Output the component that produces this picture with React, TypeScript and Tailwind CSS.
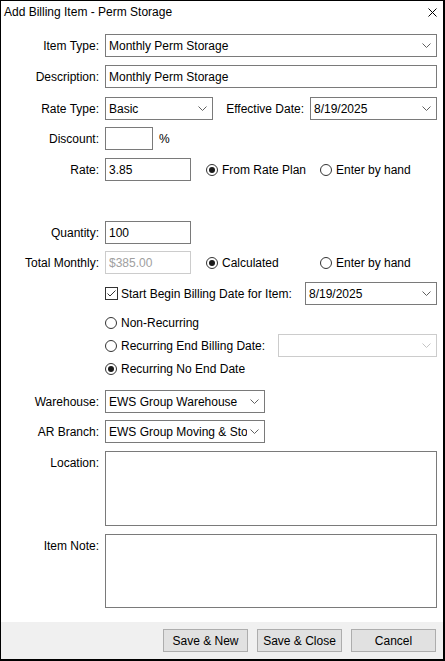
import React from "react";

const Chevron = ({ disabled }: { disabled?: boolean }) => (
  <svg width="9" height="5" viewBox="0 0 9 5" className="shrink-0">
    <polyline
      points="0.5,0.5 4.5,4.5 8.5,0.5"
      fill="none"
      stroke={disabled ? "#c4c4c4" : "#606060"}
      strokeWidth="1"
    />
  </svg>
);

const Box = ({
  className,
  children,
  disabled,
  chevron,
}: {
  className: string;
  children?: React.ReactNode;
  disabled?: boolean;
  chevron?: boolean;
}) => (
  <div
    className={
      "flex items-center h-[23px] shrink-0 border bg-white pl-[3px] overflow-hidden " +
      (disabled ? "border-[#cccccc] text-[#a0a0a0] " : "border-[#7a7a7a] ") +
      (chevron ? "pr-[5px] " : "pr-[3px] ") +
      className
    }
  >
    <div className={"flex-1 whitespace-nowrap overflow-hidden " + (chevron ? "mr-[3px]" : "")}>{children}</div>
    {chevron && <Chevron disabled={disabled} />}
  </div>
);

const Label = ({ children }: { children: React.ReactNode }) => (
  <div className="w-[98px] mr-[6px] text-right shrink-0 whitespace-nowrap">{children}</div>
);

const Radio = ({ checked, children, className }: { checked?: boolean; children: React.ReactNode; className?: string }) => (
  <div className={"flex items-center shrink-0 whitespace-nowrap " + (className ?? "")}>
    <div className="w-[12px] h-[12px] rounded-full border border-[#333333] bg-white flex items-center justify-center shrink-0">
      {checked && <div className="w-[6px] h-[6px] rounded-full bg-[#1a1a1a]" />}
    </div>
    <span className="ml-[4px]">{children}</span>
  </div>
);

const Button = ({ children }: { children: React.ReactNode }) => (
  <div className="w-[85px] h-[23px] bg-[#e1e1e1] border border-[#adadad] flex items-center justify-center">
    {children}
  </div>
);

export default function App() {
  return (
    <div className="w-[445px] h-[661px] bg-white border-l border-t border-r-2 border-b-2 border-black flex flex-col font-['Liberation_Sans',Arial,sans-serif] text-[12px] leading-[14px] text-black">
      <div className="h-[22px] flex justify-between items-start pl-[3px] pr-[6px] shrink-0">
        <div className="pt-[4px]">Add Billing Item - Perm Storage</div>
        <svg width="9" height="9" viewBox="0 0 9 9" className="mt-[7px]">
          <line x1="0.5" y1="0.5" x2="8.5" y2="8.5" stroke="#000" strokeWidth="1" />
          <line x1="8.5" y1="0.5" x2="0.5" y2="8.5" stroke="#000" strokeWidth="1" />
        </svg>
      </div>

      <div className="flex flex-col w-[436px] pt-[11px]">
        <div className="flex items-center h-[23px]">
          <Label>Item Type:</Label>
          <Box className="w-[332px]" chevron>Monthly Perm Storage</Box>
        </div>

        <div className="flex items-center h-[23px] mt-[8px]">
          <Label>Description:</Label>
          <Box className="w-[332px]">Monthly Perm Storage</Box>
        </div>

        <div className="flex items-center h-[23px] mt-[9px]">
          <Label>Rate Type:</Label>
          <Box className="w-[108px]" chevron>Basic</Box>
          <div className="ml-auto mr-[6px] whitespace-nowrap">Effective Date:</div>
          <Box className="w-[127px]" chevron>8/19/2025</Box>
        </div>

        <div className="flex items-center h-[23px] mt-[7px]">
          <Label>Discount:</Label>
          <Box className="w-[48px]" />
          <div className="ml-[6px]">%</div>
        </div>

        <div className="flex items-center h-[23px] mt-[8px]">
          <Label>Rate:</Label>
          <Box className="w-[86px]">3.85</Box>
          <Radio checked className="ml-[15px] w-[114px]">From Rate Plan</Radio>
          <Radio>Enter by hand</Radio>
        </div>

        <div className="flex items-center h-[23px] mt-[40px]">
          <Label>Quantity:</Label>
          <Box className="w-[86px]">100</Box>
        </div>

        <div className="flex items-center h-[23px] mt-[7px]">
          <Label>Total Monthly:</Label>
          <Box className="w-[86px]" disabled>$385.00</Box>
          <Radio checked className="ml-[15px] w-[114px]">Calculated</Radio>
          <Radio>Enter by hand</Radio>
        </div>

        <div className="flex items-center h-[23px] mt-[8px] pl-[104px]">
          <div className="w-[13px] h-[13px] border border-[#333333] bg-white shrink-0 flex items-center justify-center">
            <svg width="11" height="11" viewBox="0 0 11 11">
              <polyline points="1.5,5.5 4,8 9.5,2.5" fill="none" stroke="#333333" strokeWidth="1" />
            </svg>
          </div>
          <span className="ml-[3px] whitespace-nowrap">Start Begin Billing Date for Item:</span>
          <Box className="w-[132px] ml-auto" chevron>8/19/2025</Box>
        </div>

        <div className="flex items-center h-[23px] mt-[6px] pl-[104px]">
          <Radio>Non-Recurring</Radio>
        </div>

        <div className="flex items-center h-[23px] pl-[104px]">
          <Radio>Recurring End Billing Date:</Radio>
          <Box className="w-[159px] ml-auto" disabled chevron />
        </div>

        <div className="flex items-center h-[23px] pl-[104px]">
          <Radio checked>Recurring No End Date</Radio>
        </div>

        <div className="flex items-center h-[23px] mt-[10px]">
          <Label>Warehouse:</Label>
          <Box className="w-[160px]" chevron>EWS Group Warehouse</Box>
        </div>

        <div className="flex items-center h-[23px] mt-[7px]">
          <Label>AR Branch:</Label>
          <Box className="w-[160px]" chevron>EWS Group Moving &amp; Storage</Box>
        </div>

        <div className="flex items-start mt-[8px]">
          <div className="w-[98px] mr-[6px] text-right shrink-0 pt-[5px]">Location:</div>
          <div className="w-[332px] h-[75px] border border-[#7a7a7a] bg-white" />
        </div>

        <div className="flex items-start mt-[8px]">
          <div className="w-[98px] mr-[6px] text-right shrink-0 pt-[5px]">Item Note:</div>
          <div className="w-[332px] h-[74px] border border-[#7a7a7a] bg-white" />
        </div>
      </div>

      <div className="flex-1" />

      <div className="h-[37px] shrink-0 bg-[#f0f0f0] flex justify-end items-start pt-[7px] pr-[7px] gap-[9px]">
        <Button>Save &amp; New</Button>
        <Button>Save &amp; Close</Button>
        <Button>Cancel</Button>
      </div>
    </div>
  );
}
